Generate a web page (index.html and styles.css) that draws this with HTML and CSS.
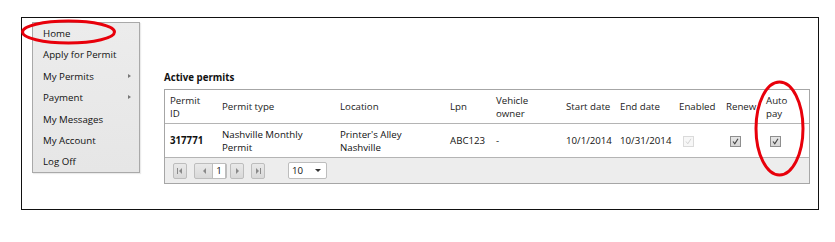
FILE: index.html
```html
<!DOCTYPE html>
<html>
<head>
<meta charset="utf-8">
<link rel="stylesheet" href="styles.css">
</head>
<body>
<div class="frame">
  <ul class="menu">
    <li class="item">Home</li>
    <li class="item">Apply for Permit</li>
    <li class="item">My Permits<span class="arrow"></span></li>
    <li class="item">Payment<span class="arrow"></span></li>
    <li class="item">My Messages</li>
    <li class="item">My Account</li>
    <li class="item">Log Off</li>
  </ul>
  <div class="content">
    <div class="title">Active permits</div>
    <div class="grid">
      <table class="tbl">
        <colgroup>
          <col class="c1"><col class="c2"><col class="c3"><col class="c4"><col class="c5">
          <col class="c6"><col class="c7"><col class="c8"><col class="c9"><col class="c10">
        </colgroup>
        <thead>
          <tr>
            <th>Permit<br>ID</th>
            <th>Permit type</th>
            <th>Location</th>
            <th>Lpn</th>
            <th>Vehicle<br>owner</th>
            <th>Start date</th>
            <th>End date</th>
            <th>Enabled</th>
            <th>Renew</th>
            <th>Auto<br>pay</th>
          </tr>
        </thead>
        <tbody>
          <tr>
            <td class="bold">317771</td>
            <td>Nashville Monthly<br>Permit</td>
            <td>Printer's Alley<br>Nashville</td>
            <td>ABC123</td>
            <td>-</td>
            <td>10/1/2014</td>
            <td>10/31/2014</td>
            <td><span class="cb disabled"><svg viewBox="0 0 9 9" width="9" height="9"><path d="M2 4.5 L3.8 6.8 L7 1.8" fill="none" stroke="#d4d4d4" stroke-width="1"/></svg></span></td>
            <td><span class="cb"><svg viewBox="0 0 9 9" width="9" height="9"><path d="M2 4.5 L3.8 6.8 L7 1.8" fill="none" stroke="#444" stroke-width="1.2"/></svg></span></td>
            <td><span class="cb"><svg viewBox="0 0 9 9" width="9" height="9"><path d="M2 4.5 L3.8 6.8 L7 1.8" fill="none" stroke="#444" stroke-width="1.2"/></svg></span></td>
          </tr>
        </tbody>
      </table>
      <div class="pager">
        <span class="pbtn"><svg viewBox="0 0 12 12" width="12" height="12"><rect x="3" y="3" width="1" height="6" fill="#8a8a8a"/><path d="M8 3 L5 6 L8 9 Z" fill="#8a8a8a"/></svg></span>
        <span class="pgroup">
          <span class="pbtn prev"><svg viewBox="0 0 12 12" width="12" height="12"><path d="M8 3 L5 6 L8 9 Z" fill="#8a8a8a"/></svg></span>
          <span class="pnum">1</span>
        </span>
        <span class="pbtn"><svg viewBox="0 0 12 12" width="12" height="12"><path d="M5 3 L8 6 L5 9 Z" fill="#8a8a8a"/></svg></span>
        <span class="pbtn last"><svg viewBox="0 0 12 12" width="12" height="12"><path d="M4 3 L7 6 L4 9 Z" fill="#8a8a8a"/><rect x="8" y="3" width="1" height="6" fill="#8a8a8a"/></svg></span>
        <span class="select">10<span class="down"></span></span>
      </div>
    </div>
  </div>
</div>
<svg class="marks" width="835" height="242" viewBox="0 0 835 242">
  <ellipse cx="68.5" cy="32" rx="46" ry="11" fill="none" stroke="#e8000b" stroke-width="3"/>
  <ellipse cx="779.5" cy="128.5" rx="23.5" ry="46.5" fill="none" stroke="#e8000b" stroke-width="3"/>
</svg>
</body>
</html>
```

FILE: styles.css
```css
html, body {
  margin: 0;
  padding: 0;
  background: #ffffff;
}
body {
  font-family: "Open Sans", "Liberation Sans", sans-serif;
  font-size: 9.7px;
  color: #111;
  position: relative;
  width: 835px;
  height: 242px;
  overflow: hidden;
}
.frame {
  margin: 17px 0 0 21px;
  width: 796px;
  height: 191px;
  border: 1px solid #111;
  display: flex;
  align-items: flex-start;
}
.menu {
  list-style: none;
  margin: 4px 0 0 10px;
  padding: 0;
  width: 106px;
  height: 149px;
  border: 1px solid #a9a9a9;
  background: linear-gradient(#ececec, #e6e6e6);
  box-shadow: 1px 1px 1px rgba(0,0,0,0.08);
}
.item {
  height: 21.4px;
  line-height: 21.4px;
  padding-left: 10px;
  position: relative;
  color: #111;
}
.arrow {
  position: absolute;
  left: 95px;
  top: 8px;
  width: 0;
  height: 0;
  border-top: 2.5px solid transparent;
  border-bottom: 2.5px solid transparent;
  border-left: 3px solid #777;
}
.content {
  margin-left: 24px;
  display: flex;
  flex-direction: column;
}
.title {
  margin-top: 54px;
  height: 12px;
  line-height: 12px;
  font-weight: bold;
  margin-bottom: 5px;
  color: #111;
}
.grid {
  width: 644px;
  border: 1px solid #a6a6a6;
  background: #fff;
}
.tbl {
  width: 644px;
  border-collapse: collapse;
  table-layout: fixed;
}
.c1 { width: 52px; }
.c2 { width: 118px; }
.c3 { width: 110px; }
.c4 { width: 46px; }
.c5 { width: 70px; }
.c6 { width: 54px; }
.c7 { width: 59px; }
.c8 { width: 47px; }
.c9 { width: 40px; }
.c10 { width: 48px; }
.tbl th {
  font-weight: normal;
  text-align: left;
  vertical-align: middle;
  height: 33px;
  padding: 0 0 0 5px;
  line-height: 13px;
  color: #222;
  border-bottom: 1px solid #b4b4b4;
  white-space: nowrap;
  overflow: visible;
}
.tbl td {
  height: 33px;
  padding: 0 0 0 5px;
  line-height: 13px;
  vertical-align: middle;
  border-bottom: 1px solid #b4b4b4;
  white-space: nowrap;
}
.bold { font-weight: bold; }
.cb {
  display: inline-flex;
  align-items: center;
  justify-content: center;
  width: 9px;
  height: 9px;
  margin-left: 4px;
  margin-top: 1px;
  border: 1px solid #8e8e8e;
  background: linear-gradient(#e6e6e6, #d6d6d6);
  vertical-align: middle;
}
.cb.disabled {
  border-color: #dadada;
  background: #f7f7f7;
}
.pager {
  height: 25px;
  background: #ededed;
  display: flex;
  align-items: center;
  padding-left: 8px;
}
.pbtn {
  display: inline-flex;
  align-items: center;
  justify-content: center;
  width: 12px;
  height: 14px;
  border: 1px solid #bdbdbd;
  border-radius: 2px;
  background: linear-gradient(#e9e9e9, #d9d9d9);
  margin-right: 7px;
}
.pbtn.last { margin-right: 0; }
.pgroup {
  display: inline-flex;
  align-items: center;
  border: 1px solid #bdbdbd;
  border-radius: 2px;
  background: linear-gradient(#e9e9e9, #d9d9d9);
  margin-right: 3px;
  height: 14px;
}
.pgroup .pbtn.prev {
  border: none;
  background: none;
  width: 17px;
  margin: 0;
}
.pnum {
  width: 12px;
  height: 14px;
  line-height: 14px;
  background: #fff;
  border-left: 1px solid #bdbdbd;
  border-right: 1px solid #bdbdbd;
  text-align: center;
  color: #111;
}
.select {
  margin-left: 23px;
  width: 34px;
  height: 15px;
  line-height: 15px;
  border: 1px solid #bdbdbd;
  border-radius: 2px;
  background: #fff;
  padding-left: 3px;
  position: relative;
  color: #111;
}
.down {
  position: absolute;
  right: 5px;
  top: 6px;
  width: 0;
  height: 0;
  border-left: 3px solid transparent;
  border-right: 3px solid transparent;
  border-top: 3px solid #333;
}
.marks {
  position: absolute;
  left: 0;
  top: 0;
  pointer-events: none;
}
```
